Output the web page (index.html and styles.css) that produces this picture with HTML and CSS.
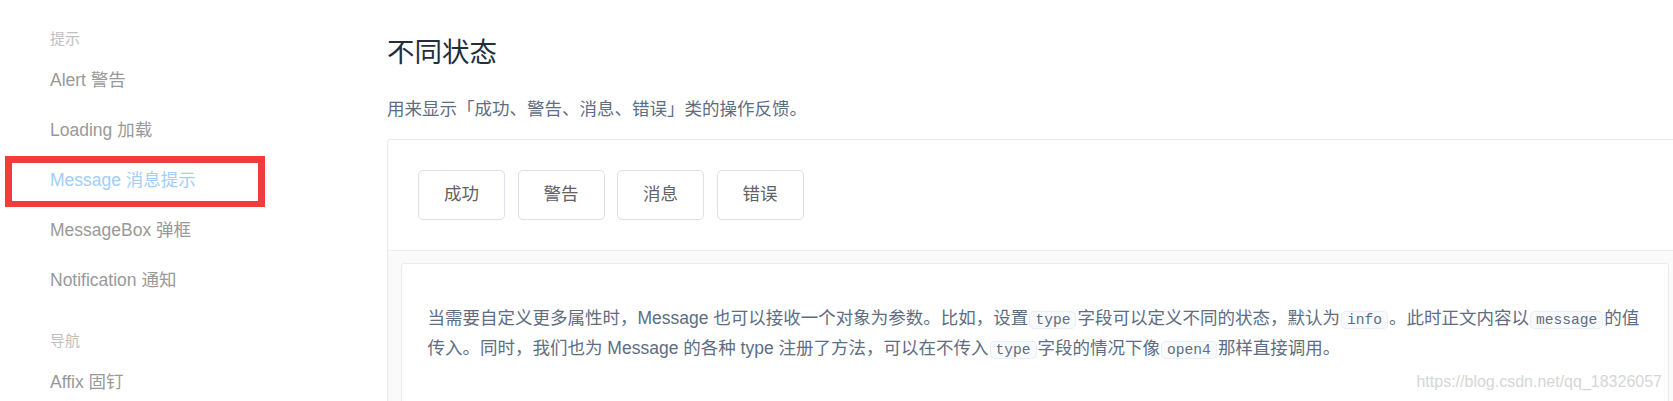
FILE: index.html
```html
<!DOCTYPE html>
<html lang="zh-CN">
<head>
  <meta charset="UTF-8" />
  <meta name="viewport" content="width=device-width, initial-scale=1.0" />
  <title>Message 消息提示</title>
  <link rel="stylesheet" href="styles.css">
</head>
<body>
  <div class="layout">
    <aside class="side-nav">
      <div class="nav-group">
        <div class="group-title">提示</div>
        <ul class="nav-list">
          <li><a class="nav-link">Alert 警告</a></li>
          <li><a class="nav-link">Loading 加载</a></li>
          <li><a class="nav-link active">Message 消息提示</a></li>
          <li><a class="nav-link">MessageBox 弹框</a></li>
          <li><a class="nav-link">Notification 通知</a></li>
        </ul>
      </div>
      <div class="nav-group">
        <div class="group-title">导航</div>
        <ul class="nav-list">
          <li><a class="nav-link">Affix 固钉</a></li>
        </ul>
      </div>
    </aside>

    <main class="content">
      <h3 class="section-title">不同状态</h3>
      <p class="section-desc">用来显示「成功、警告、消息、错误」类的操作反馈。</p>

      <div class="demo-block">
        <div class="source">
          <button class="btn">成功</button>
          <button class="btn">警告</button>
          <button class="btn">消息</button>
          <button class="btn">错误</button>
        </div>
        <div class="meta">
          <div class="description">
            <p>当需要自定义更多属性时，Message 也可以接收一个对象为参数。比如，设置<code>type</code>字段可以定义不同的状态，默认为<code>info</code>。此时正文内容以<code>message</code>的值<br>传入。同时，我们也为 Message 的各种 type 注册了方法，可以在不传入<code>type</code>字段的情况下像<code>open4</code>那样直接调用。</p>
          </div>
        </div>
      </div>
    </main>
  </div>

  <div class="watermark">https://blog.csdn.net/qq_18326057</div>
</body>
</html>
```

FILE: styles.css
```css
body, html {
  margin: 0;
  padding: 0;
  background: #fff;
  font-family: "Liberation Sans", "Noto Sans CJK SC", sans-serif;
  overflow: hidden;
}

.layout {
  display: flex;
  height: 401px;
  overflow: hidden;
}

.side-nav {
  width: 387px;
  flex-shrink: 0;
  padding-top: 23px;
}
.nav-group + .nav-group {
  margin-top: 20px;
}
.group-title {
  padding-left: 50px;
  font-size: 15px;
  line-height: 32px;
  color: #c0c0c0;
}
.nav-list {
  list-style: none;
  margin: 0;
  padding: 0;
}
.nav-link {
  display: block;
  position: relative;
  padding-left: 50px;
  height: 50px;
  line-height: 50px;
  font-size: 17.5px;
  color: #999;
  white-space: nowrap;
}
.nav-link.active {
  color: #a3cdfb;
}
/* red marker drawn over the screenshot */
.nav-link.active::after {
  content: "";
  position: absolute;
  left: 5px;
  top: 1px;
  width: 246px;
  height: 38px;
  border: 7px solid #f23b3b;
  border-bottom-width: 6px;
}

.content {
  flex: 1;
  min-width: 0;
}
.section-title {
  margin: 32px 0 23px;
  font-size: 27.5px;
  line-height: 41px;
  font-weight: normal;
  color: #1f2f3d;
}
.section-desc {
  margin: 0 0 15.5px;
  font-size: 17.5px;
  line-height: 27.5px;
  color: #5e6d82;
}

.demo-block {
  width: 1293px;
  border: 1px solid #ebebeb;
  border-radius: 3px;
}
.source {
  display: flex;
  gap: 12.5px;
  padding: 30px;
}
.btn {
  padding: 15px 25px;
  font-family: inherit;
  font-size: 17.5px;
  line-height: 17.5px;
  color: #606266;
  background: #fff;
  border: 1px solid #dcdfe6;
  border-radius: 5px;
}

.meta {
  border-top: 1px solid #eaeefb;
  background: #fafafa;
  padding: 12.5px;
  height: 200px;
}
.description {
  background: #fff;
  border: 1px solid #ebebeb;
  border-radius: 3px;
  padding: 41px 26px;
}
.description p {
  margin: 0;
  font-size: 17.5px;
  line-height: 27.5px;
  color: #5e6d82;
  white-space: nowrap;
}
.description code {
  font-family: "Liberation Mono", monospace;
  font-size: 14.6px;
  padding: 0 5px;
  margin: 0 1px;
  color: #5e6d82;
  background: #f9fafc;
  border: 1px solid #eaeefb;
  border-radius: 5px;
}

.watermark {
  position: absolute;
  right: 11px;
  top: 374px;
  font-family: "Liberation Sans", sans-serif;
  font-size: 16px;
  line-height: 16px;
  color: #d6d6d6;
}
```
